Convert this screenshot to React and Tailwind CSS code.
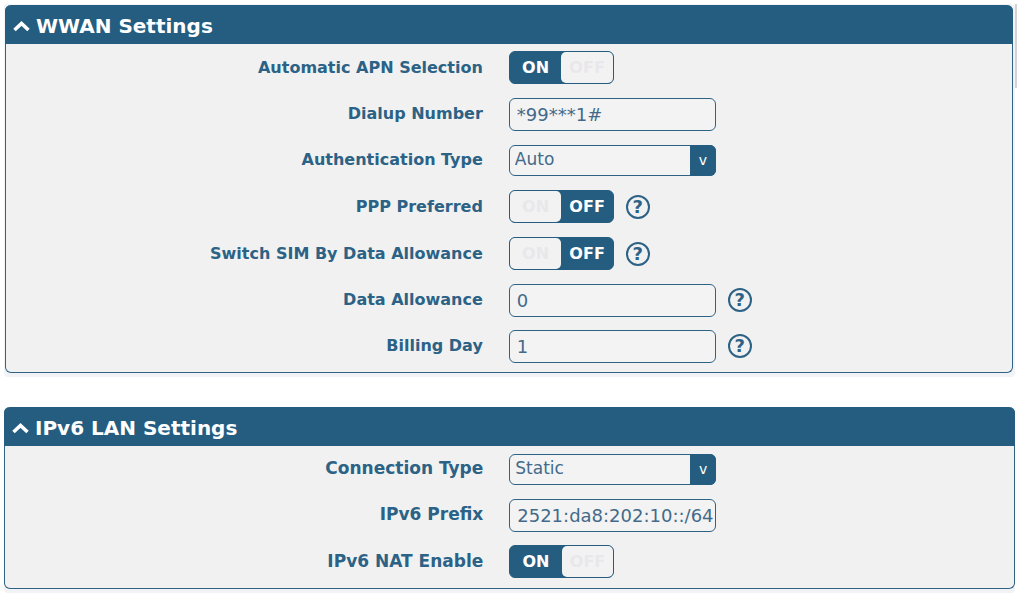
import React from 'react';

const App = () => {
  return (
    <main className="min-h-screen bg-white pt-1 pl-1 font-['DejaVu_Sans',Verdana,sans-serif] text-[#2b6285]">
      <div className="flex items-start mb-[30px]">
        <div className="flex-1 bg-[#f1f3f6] pt-px pl-px pr-0.5 pb-1 rounded">
          <Panel title="WWAN Settings" className="text-base">
            <ToggleRow id="apn" label="Automatic APN Selection" on />
            <InputRow id="dialup" label="Dialup Number" value="*99***1#" />
            <SelectRow id="auth" label="Authentication Type" value="Auto" options={['Auto', 'PAP', 'CHAP']} />
            <ToggleRow id="ppp" label="PPP Preferred" help />
            <ToggleRow id="switch-sim" label="Switch SIM By Data Allowance" help />
            <InputRow id="allowance" label="Data Allowance" value="0" help />
            <InputRow id="billing" label="Billing Day" value="1" help />
          </Panel>
        </div>
        {/* Scroll thumb */}
        <div className="w-0.5 h-21 mr-1 bg-[#d3d3d6]"></div>
      </div>

      <div className="mr-1.5 pb-1 bg-[#f1f3f6] rounded">
        <Panel title="IPv6 LAN Settings" className="text-[17px]">
          <SelectRow id="connection" label="Connection Type" value="Static" options={['Static', 'DHCPv6', 'Delegate']} />
          <InputRow id="prefix" label="IPv6 Prefix" value="2521:da8:202:10::/64" />
          <ToggleRow id="nat" label="IPv6 NAT Enable" on />
        </Panel>
      </div>
    </main>
  );
};

const Panel = ({ title, className, children }) => (
  <section className="rounded-md border border-t-0 border-[#2f6385] bg-[#f1f1f1]">
    <h2 className="-mx-px h-[39px] rounded-t-md bg-[#245d7f] text-white text-xl font-bold">
      <button type="button" className="flex h-full w-full items-center gap-1.5 pl-2 pt-0.5">
        <svg className="w-[17px] h-3" viewBox="0 0 17 12" fill="none" stroke="currentColor" strokeWidth="3.6" aria-hidden="true">
          <path d="M1.5 10 L8.5 3.5 L15.5 10" />
        </svg>
        {title}
      </button>
    </h2>
    <div className={`pb-[3px] ${className}`}>{children}</div>
  </section>
);

const Row = ({ id, label, help, className, children }) => (
  <div className={`flex items-center ${className}`}>
    <div className="w-[47.4%] shrink-0 text-right font-bold">
      <label htmlFor={id}>{label}</label>
    </div>
    <div className="flex items-center gap-3 pl-[26px]">
      {children}
      {help && (
        <button
          type="button"
          aria-label={`Help: ${label}`}
          className="flex w-6 h-6 items-center justify-center rounded-full border-2 border-[#2b6285] text-lg leading-none font-bold"
        >
          ?
        </button>
      )}
    </div>
  </div>
);

const ToggleRow = ({ id, label, on, help }) => (
  <Row id={id} label={label} help={help} className="h-[47px]">
    <div className="relative flex w-[105px] h-[33px] rounded-md border border-[#245d7f] bg-[#245d7f] text-base font-bold">
      <input id={id} type="checkbox" role="switch" defaultChecked={on} className="absolute inset-0 opacity-0" />
      <span className={on ? 'flex-1 flex items-center justify-center text-white' : 'flex-1 flex items-center justify-center rounded-[5px] bg-[#f3f2f3] text-[#e8e7ea]'}>
        ON
      </span>
      <span className={on ? 'flex-1 flex items-center justify-center rounded-[5px] bg-[#f3f2f3] text-[#e8e7ea]' : 'flex-1 flex items-center justify-center text-white'}>
        OFF
      </span>
    </div>
  </Row>
);

const InputRow = ({ id, label, value, help }) => (
  <Row id={id} label={label} help={help} className="h-[46px]">
    <input
      id={id}
      type="text"
      defaultValue={value}
      className="w-[207px] h-[33px] rounded-md border border-[#2f6385] bg-[#f3f3f3] pl-[7px] text-lg text-[#436a8a]"
    />
  </Row>
);

const SelectRow = ({ id, label, value, options }) => (
  <Row id={id} label={label} className="h-[46px]">
    <div className="relative">
      <select
        id={id}
        defaultValue={value}
        className="block w-[207px] h-[31px] appearance-none rounded-md border border-[#2f6385] bg-[#f3f3f3] pl-[5px] text-[17px] text-[#436a8a]"
      >
        {options.map((option) => (
          <option key={option}>{option}</option>
        ))}
      </select>
      <span className="pointer-events-none absolute inset-y-0 right-0 flex w-[26px] items-center justify-center rounded-r-md bg-[#245d7f] text-sm text-white">
        v
      </span>
    </div>
  </Row>
);

export default App;
